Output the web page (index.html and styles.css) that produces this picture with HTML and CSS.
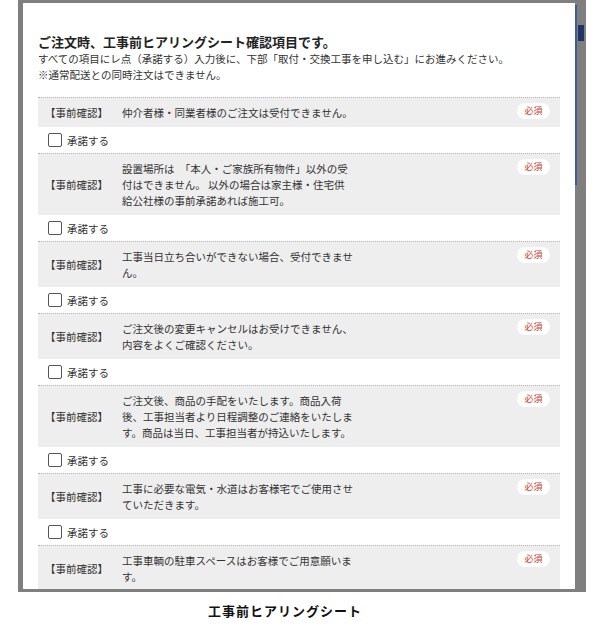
FILE: index.html
```html
<!DOCTYPE html>
<html lang="ja">
<head>
<meta charset="utf-8">
<title>工事前ヒアリングシート</title>
<link rel="stylesheet" href="styles.css">
</head>
<body>
<div class="shot">
  <div class="frame">
    <div class="modal">
      <h2 class="title">ご注文時、工事前ヒアリングシート確認項目です。</h2>
      <p class="lead">すべての項目にレ点（承諾する）入力後に、下部「取付・交換工事を申し込む」にお進みください。<br>※通常配送との同時注文はできません。</p>

      <div class="item">
        <div class="q"><div class="label">【事前確認】</div><div class="text">仲介者様・同業者様のご注文は受付できません。</div><span class="req">必須</span></div>
        <label class="agree"><span class="box"></span>承諾する</label>
      </div>
      <div class="item">
        <div class="q"><div class="label">【事前確認】</div><div class="text">設置場所は　「本人・ご家族所有物件」以外の受付はできません。 以外の場合は家主様・住宅供給公社様の事前承諾あれば施工可。</div><span class="req">必須</span></div>
        <label class="agree"><span class="box"></span>承諾する</label>
      </div>
      <div class="item">
        <div class="q"><div class="label">【事前確認】</div><div class="text">工事当日立ち合いができない場合、受付できません。</div><span class="req">必須</span></div>
        <label class="agree"><span class="box"></span>承諾する</label>
      </div>
      <div class="item">
        <div class="q"><div class="label">【事前確認】</div><div class="text">ご注文後の変更キャンセルはお受けできません、内容をよくご確認ください。</div><span class="req">必須</span></div>
        <label class="agree"><span class="box"></span>承諾する</label>
      </div>
      <div class="item">
        <div class="q"><div class="label">【事前確認】</div><div class="text">ご注文後、商品の手配をいたします。商品入荷後、工事担当者より日程調整のご連絡をいたします。商品は当日、工事担当者が持込いたします。</div><span class="req">必須</span></div>
        <label class="agree"><span class="box"></span>承諾する</label>
      </div>
      <div class="item">
        <div class="q"><div class="label">【事前確認】</div><div class="text">工事に必要な電気・水道はお客様宅でご使用させていただきます。</div><span class="req">必須</span></div>
        <label class="agree"><span class="box"></span>承諾する</label>
      </div>
      <div class="item">
        <div class="q"><div class="label">【事前確認】</div><div class="text">工事車輌の駐車スペースはお客様でご用意願います。</div><span class="req">必須</span></div>
      </div>
    </div>
    <div class="side">
      <span class="side-bar"></span>
      <span class="side-tag"></span>
    </div>
  </div>
  <p class="caption">工事前ヒアリングシート</p>
</div>
</body>
</html>
```

FILE: styles.css
```css
html, body {
  margin: 0;
  padding: 0;
  background: #ffffff;
}
body {
  font-family: "Noto Sans CJK JP", "Noto Sans", sans-serif;
  color: #333333;
}
.shot {
  width: 600px;
  height: 644px;
  overflow: hidden;
}
.frame {
  margin-left: 18px;
  width: 568px;
  height: 592px;
  box-sizing: border-box;
  background: #7f7f7f;
  padding: 3px 0 3px 5px;
  display: flex;
}
.modal {
  width: 552px;
  height: 586px;
  box-sizing: border-box;
  background: #ffffff;
  padding: 31px 15px 0 15px;
  overflow: hidden;
}
.title {
  margin: 0 0 1px 0;
  font-size: 13px;
  line-height: 16px;
  font-weight: bold;
  color: #222222;
}
.lead {
  margin: 0 0 14px 0;
  font-size: 10.5px;
  line-height: 16px;
  color: #333333;
}
.q {
  display: flex;
  background: #eeeeee;
  border-top: 1px dotted #b8b8b8;
  padding: 7px 0 6px 0;
  font-size: 10.5px;
  line-height: 16px;
}
.label {
  width: 77px;
  flex: none;
  text-align: center;
  align-self: center;
}
.text {
  width: 232px;
  margin-left: 7px;
  flex: none;
}
.req {
  margin-left: auto;
  margin-right: 10px;
  margin-top: -2px;
  align-self: flex-start;
  width: 33px;
  height: 16px;
  border-radius: 8px;
  background: #ffffff;
  color: #c8412e;
  font-size: 9px;
  line-height: 16px;
  text-align: center;
}
.agree {
  display: flex;
  align-items: center;
  height: 26px;
  padding-left: 10px;
  font-size: 10.5px;
  color: #333333;
}
.box {
  width: 12px;
  height: 12px;
  border: 1px solid #555555;
  border-radius: 2px;
  background: #ffffff;
  margin-right: 5px;
}
.side {
  width: 11px;
  display: flex;
  flex-direction: column;
  position: relative;
}
.side-bar {
  display: block;
  width: 2px;
  height: 180px;
  margin-top: 2px;
  background: #3b5b9b;
}
.side-tag {
  position: absolute;
  left: 3px;
  top: 22px;
  width: 6px;
  height: 16px;
  background: #1f3566;
}
.caption {
  margin: 9px 0 0 0;
  text-align: center;
  padding-right: 30px;
  font-size: 13px;
  line-height: 20px;
  font-weight: bold;
  letter-spacing: 1px;
  color: #111111;
}
```
